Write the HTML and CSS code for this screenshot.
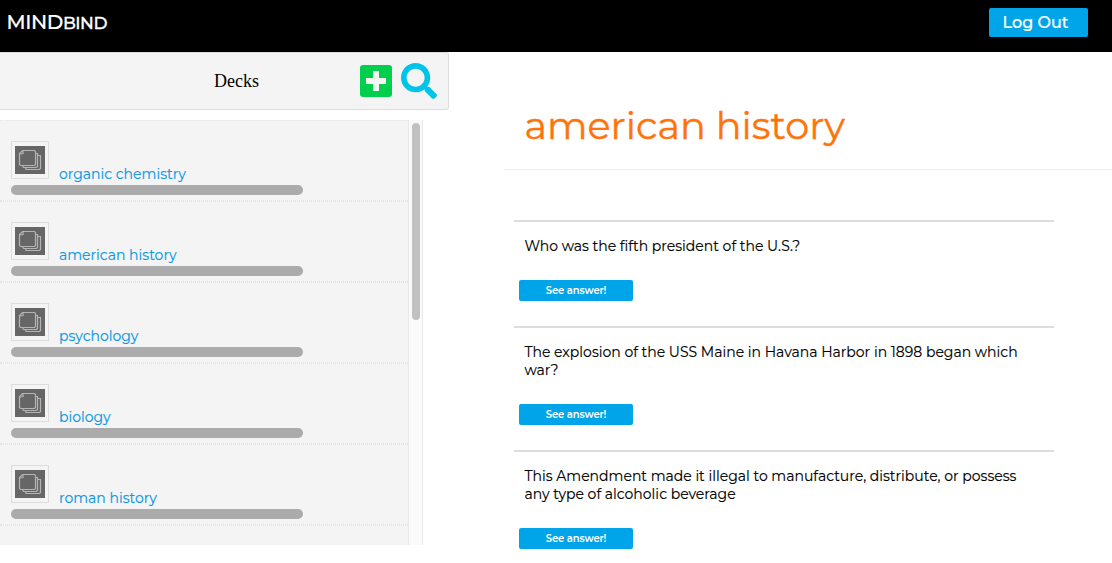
FILE: index.html
```
<!DOCTYPE html>
<html lang="en">
<head>
<meta charset="utf-8">
<title>MindBind</title>
<link rel="stylesheet" href="styles.css">
</head>
<body>
<svg class="defs" width="0" height="0">
  <symbol id="deck" viewBox="0 0 30 28">
    <rect width="30" height="28" fill="#666"/>
    <g fill="none" stroke="#b4b4b4" stroke-width="1.2">
      <path d="M7.5 4.5H19.5L20.5 5.5V18.5L19.5 19.5H5.5L4.5 18.5V7.5Z"/>
      <path d="M5 8L8 7.5V4.7"/>
      <path d="M20.5 7.5H22.5V20.5L21.5 21.5H8.5L7.5 19.5"/>
      <path d="M22.5 9.5H25.5V22.5L24.5 23.5H11L10.5 21.5"/>
    </g>
  </symbol>
</svg>
<header class="topbar">
  <div class="logo"><span class="logo-main">MIND</span><span class="logo-sub">BIND</span></div>
  <button class="logout">Log Out</button>
</header>
<main class="layout">
  <aside class="sidebar">
    <div class="toolbar">
      <h2 class="toolbar-title">Decks</h2>
      <svg class="add" viewBox="0 0 32 32"><rect width="32" height="32" rx="3" fill="#00cf4b"/><path d="M13 6h6v7h7v6h-7v7h-6v-7H6v-6h7z" fill="#f4f4f4"/></svg>
      <svg class="search" viewBox="0 0 512 512"><path fill="#00c3ea" d="M505 442.7L405.3 343c-4.5-4.5-10.6-7-17-7H372c27.6-35.3 44-79.7 44-128C416 93.1 322.9 0 208 0S0 93.1 0 208s93.1 208 208 208c48.3 0 92.7-16.4 128-44v16.3c0 6.4 2.5 12.5 7 17l99.7 99.7c9.4 9.4 24.6 9.4 33.9 0l28.3-28.3c9.4-9.4 9.4-24.6.1-34zM208 336c-70.7 0-128-57.2-128-128 0-70.7 57.2-128 128-128 70.7 0 128 57.2 128 128 0 70.7-57.2 128-128 128z"/></svg>
    </div>
    <div class="decks">
      <ul class="deck-list">
        <li class="deck"><div class="deck-row"><span class="thumb"><svg><use href="#deck"/></svg></span><a class="deck-name">organic chemistry</a></div><div class="progress"></div></li>
        <li class="deck"><div class="deck-row"><span class="thumb"><svg><use href="#deck"/></svg></span><a class="deck-name">american history</a></div><div class="progress"></div></li>
        <li class="deck"><div class="deck-row"><span class="thumb"><svg><use href="#deck"/></svg></span><a class="deck-name">psychology</a></div><div class="progress"></div></li>
        <li class="deck"><div class="deck-row"><span class="thumb"><svg><use href="#deck"/></svg></span><a class="deck-name">biology</a></div><div class="progress"></div></li>
        <li class="deck"><div class="deck-row"><span class="thumb"><svg><use href="#deck"/></svg></span><a class="deck-name">roman history</a></div><div class="progress"></div></li>
        <li class="deck"></li>
      </ul>
      <div class="track"><div class="handle"></div></div>
    </div>
  </aside>
  <section class="content">
    <h1 class="title">american history</h1>
    <div class="cards">
      <article class="card"><p class="question">Who was the fifth president of the U.S.?</p><button class="answer">See answer!</button></article>
      <article class="card"><p class="question">The explosion of the USS Maine in Havana Harbor in 1898 began which<br>war?</p><button class="answer">See answer!</button></article>
      <article class="card"><p class="question">This Amendment made it illegal to manufacture, distribute, or possess<br>any type of alcoholic beverage</p><button class="answer">See answer!</button></article>
    </div>
  </section>
</main>
</body>
</html>
```
FILE: styles.css
```
* { box-sizing: border-box; }
body { margin: 0; height: 563px; overflow: hidden; background: #fff; color: #000; font-family: Montserrat, Inter, sans-serif; }
button { border: 0; padding: 0; color: #fff; background: #00a5e9; font-family: inherit; border-radius: 2px; }
.defs { display: block; }
.topbar { height: 52px; background: #000; display: flex; justify-content: space-between; align-items: flex-start; padding: 8px 24px 0 6.5px; }
.logo { color: #fff; line-height: 28px; white-space: nowrap; display: flex; align-items: baseline; }
.logo-main { font-size: 20px; font-weight: 500; letter-spacing: -0.4px; -webkit-text-stroke: 0.2px; }
.logo-sub { font-size: 17px; font-weight: 500; letter-spacing: -0.5px; -webkit-text-stroke: 0.3px; }
.logout { width: 99px; height: 29px; font-size: 16px; font-weight: 500; padding-right: 6px; -webkit-text-stroke: 0.2px; }
.layout { display: flex; height: 511px; }
.sidebar { width: 449px; flex: none; }
.toolbar { height: 58px; background: #f4f4f4; border: 1px solid #ddd; border-left: 0; border-radius: 0 3px 3px 0; display: flex; align-items: center; padding-right: 11px; }
.toolbar-title { margin: 0 101px 0 214px; width: 45px; font: 18px "Liberation Serif", serif; white-space: nowrap; }
.add { width: 32px; height: 32px; margin-right: 9px; flex: none; }
.search { width: 36px; height: 36px; flex: none; }
.decks { display: flex; width: 423px; height: 425px; margin-top: 10px; overflow: hidden; }
.deck-list { list-style: none; margin: 0; padding: 0; width: 408px; background: #f4f4f4; }
.deck { height: 81px; border-top: 1px dotted #e5e5e5; border-bottom: 1px dotted #e5e5e5; padding: 20px 0 0 11px; }
.deck-row { display: flex; height: 38px; align-items: flex-end; gap: 10px; }
.thumb { width: 38px; height: 38px; border: 1px solid #ddd; padding: 4px 3px; flex: none; }
.thumb svg { display: block; width: 30px; height: 28px; }
.deck-name { color: #0b98e0; font-size: 14px; line-height: 18px; position: relative; top: 4px; white-space: nowrap; -webkit-text-stroke: 0.15px; }
.progress { width: 292px; height: 10px; margin-top: 6px; border-radius: 5px; background: #ababab; }
.track { width: 15px; background: #fafafa; border: solid #e8e8e8; border-width: 0 1px; padding: 3px 0 0 3px; }
.handle { width: 8px; height: 197px; border-radius: 4px; background: #c1c1c1; }
.content { flex: 1; padding-left: 55px; }
.title { margin: 0; height: 118px; padding: 49px 0 0 20.5px; border-bottom: 1px solid #eee; color: #ff740a; font-size: 38.2px; line-height: 50px; font-weight: 400; white-space: nowrap; -webkit-text-stroke: 0.4px; }
.cards { width: 540px; margin: 50px 0 0 10px; }
.card { border-top: 2px solid #ddd; padding: 15px 0 25px 5px; }
.question { margin: 0 0 25px 5.5px; font-size: 14px; line-height: 18px; white-space: nowrap; -webkit-text-stroke: 0.15px; }
.answer { display: block; width: 114px; height: 21px; font-size: 10px; font-weight: 600; letter-spacing: -0.1px; }
```
